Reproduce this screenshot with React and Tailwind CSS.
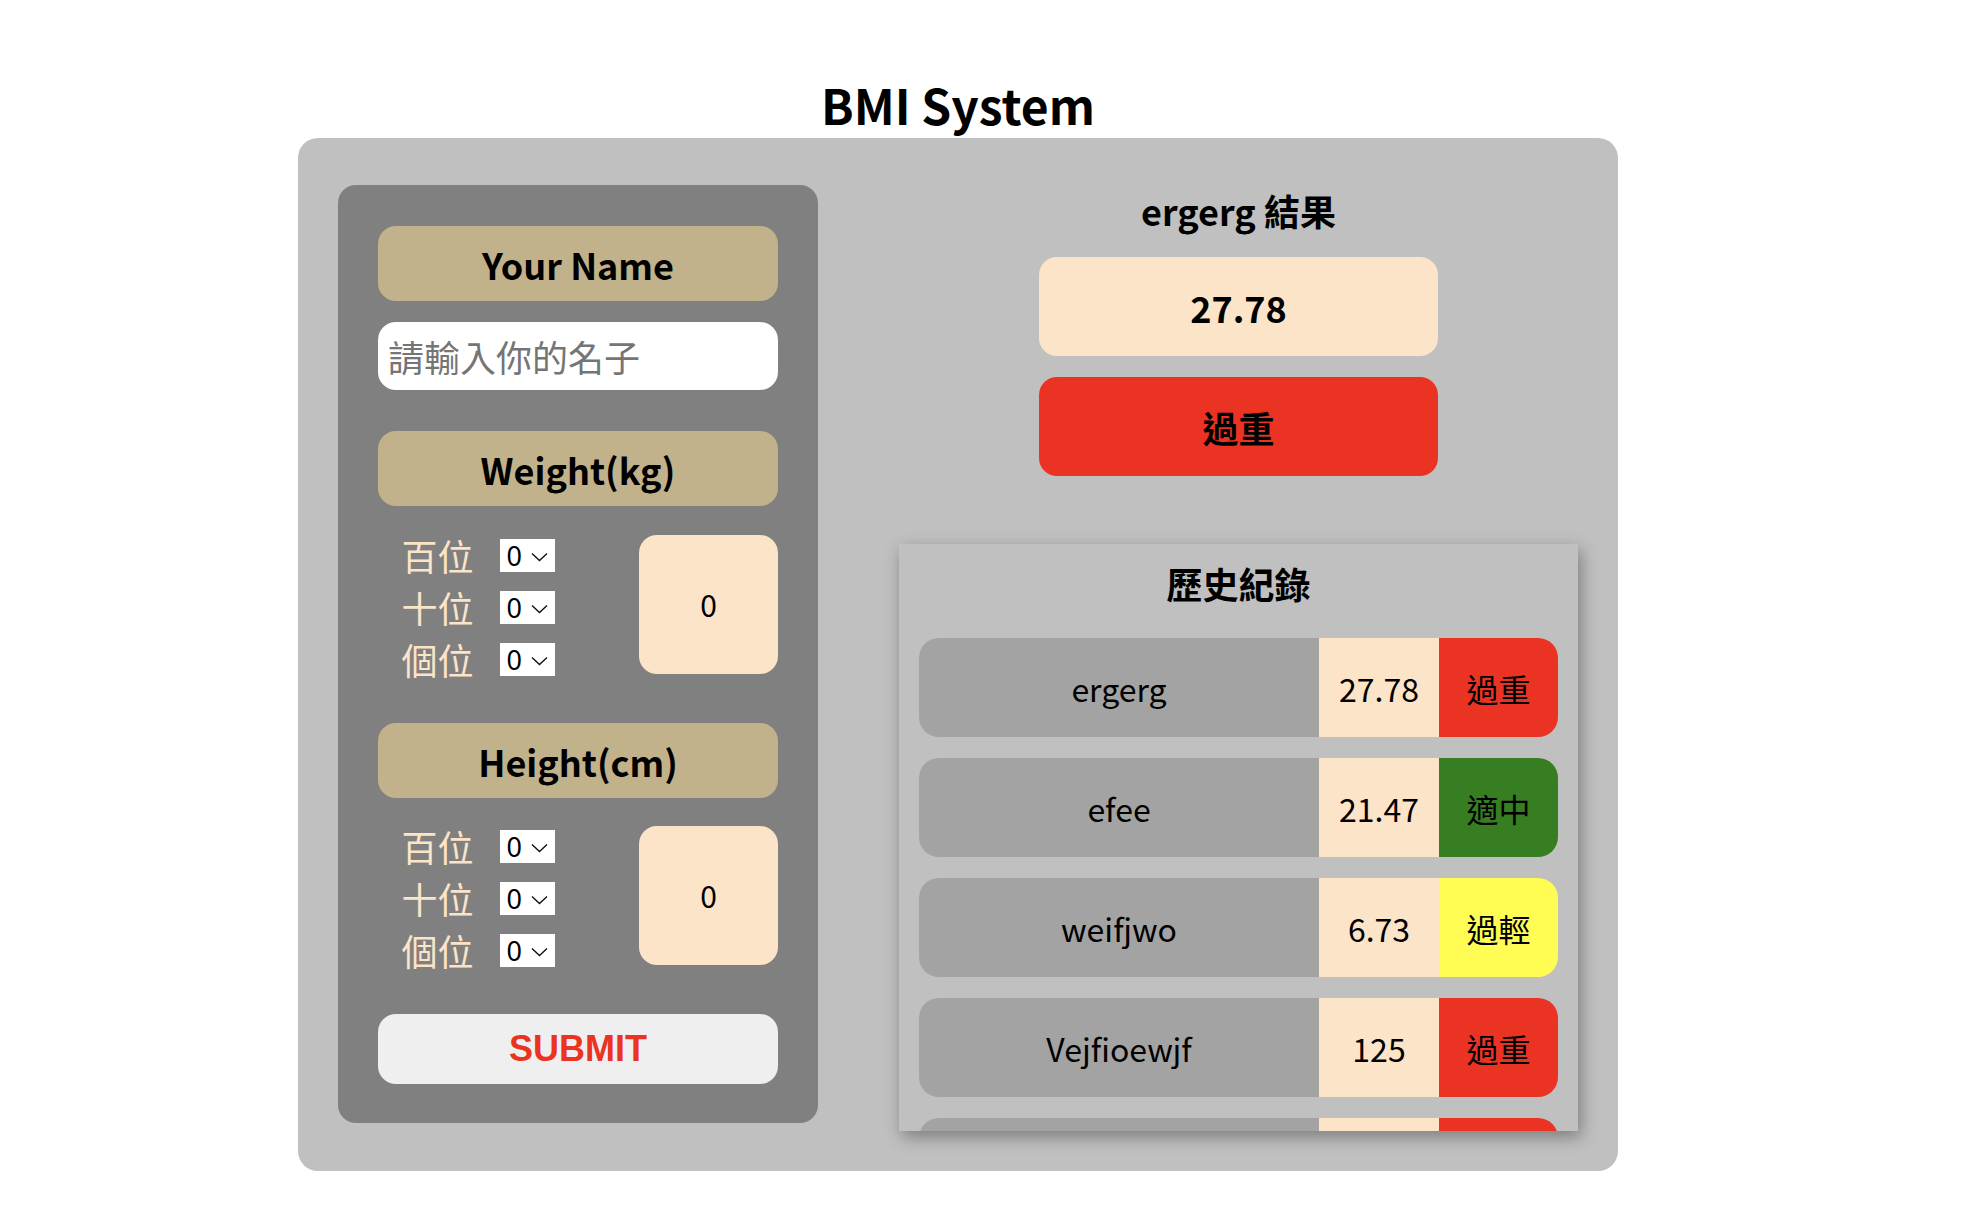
import React, { useState } from 'react';

const history = [
  { name: 'ergerg', bmi: '27.78', label: '過重', color: 'bg-[#ea3323]' },
  { name: 'efee', bmi: '21.47', label: '適中', color: 'bg-[#377d22]' },
  { name: 'weifjwo', bmi: '6.73', label: '過輕', color: 'bg-[#fffd54]' },
  { name: 'Vejfioewjf', bmi: '125', label: '過重', color: 'bg-[#ea3323]' },
  // last row is cut off by the scroll box, nothing readable
  { name: '', bmi: '', label: '', color: 'bg-[#ea3323]' },
];

const digits = ['0', '1', '2', '3', '4', '5', '6', '7', '8', '9'];

const DigitSelect = () => (
  <div className="relative w-[55px] h-[33px] bg-white">
    <select
      defaultValue="0"
      className="appearance-none bg-transparent text-black text-[27px] leading-[33px] w-full h-full pl-[7px] outline-none font-['Noto_Sans',sans-serif]"
    >
      {digits.map((d) => (
        <option key={d} value={d}>{d}</option>
      ))}
    </select>
    <svg
      className="pointer-events-none absolute left-[31px] top-[13px]"
      width="17"
      height="10"
      viewBox="0 0 17 10"
      fill="none"
    >
      <path d="M1 1.5 L8.5 8.5 L16 1.5" stroke="#111" strokeWidth="1.4" />
    </svg>
  </div>
);

const DigitPicker = ({ value }) => {
  const places = ['百位', '十位', '個位'];
  return (
    <div className="flex items-center justify-between h-[139px]">
      <div className="w-[200px] flex justify-center">
        <div className="flex flex-col mt-[5px]">
          {places.map((p) => (
            <div key={p} className="flex items-center gap-[26px] h-[52px]">
              <span className="text-[36px] leading-[52px] text-[#fbe4c8]">{p}</span>
              <DigitSelect />
            </div>
          ))}
        </div>
      </div>
      <div className="w-[139px] h-[139px] rounded-[18px] bg-[#fbe4c8] flex justify-center items-center text-[30px]">
        {value}
      </div>
    </div>
  );
};

const Label = ({ children }) => (
  <div className="h-[75px] rounded-[18px] bg-[#c2b28b] flex justify-center items-center text-[36px] font-bold">
    {children}
  </div>
);

const App = () => {
  const [name, setName] = useState('');

  return (
    <div className="min-h-screen bg-white text-black font-['Noto_Sans_CJK_TC','Noto_Sans',sans-serif]">
      <div className="ml-[298px] w-[1320px] pt-[70px]">
        <h1 className="text-center text-[48px] font-bold leading-[68px]">BMI System</h1>

        <div className="flex justify-between rounded-[20px] bg-[#c0c0c0] px-[40px] pt-[47px] pb-[40px]">
          {/* left form panel */}
          <div className="w-[480px] h-[938px] rounded-[18px] bg-[#808080] px-[40px] pt-[41px] flex flex-col">
            <Label>Your Name</Label>
            <input
              value={name}
              onChange={(e) => setName(e.target.value)}
              placeholder="請輸入你的名子"
              className="mt-[21px] h-[68px] rounded-[18px] bg-white pl-[10px] text-[36px] placeholder:text-[#757575] outline-none"
            />
            <div className="mt-[41px]">
              <Label>Weight(kg)</Label>
            </div>
            <div className="mt-[29px]">
              <DigitPicker value="0" />
            </div>
            <div className="mt-[49px]">
              <Label>Height(cm)</Label>
            </div>
            <div className="mt-[28px]">
              <DigitPicker value="0" />
            </div>
            <button className="mt-[49px] h-[70px] rounded-[18px] bg-[#efefef] text-[#ea3323] text-[36px] font-bold font-['Liberation_Sans',Arial,sans-serif]">
              SUBMIT
            </button>
          </div>

          {/* right result column */}
          <div className="w-[679px] flex flex-col items-center">
            <div className="-mt-[1px] text-[36px] leading-[52px] font-bold">ergerg 結果</div>
            <div className="mt-[21px] w-[399px] h-[99px] rounded-[18px] bg-[#fbe4c8] flex justify-center items-center text-[36px] font-bold">
              27.78
            </div>
            <div className="mt-[21px] w-[399px] h-[99px] rounded-[18px] bg-[#ea3323] flex justify-center items-center text-[36px] font-bold">
              過重
            </div>

            <div className="mt-[68px] w-[679px] h-[587px] overflow-hidden bg-[#c0c0c0] shadow-[3px_6px_16px_rgba(0,0,0,0.35)] px-[20px] pt-[13px]">
              <div className="text-center text-[36px] leading-[52px] font-bold">歷史紀錄</div>
              <div className="mt-[29px] flex flex-col gap-[21px]">
                {history.map((h, i) => (
                  <div key={i} className="flex h-[99px] shrink-0 text-[32px]">
                    <div className="w-[400px] rounded-l-[20px] bg-[#a3a3a3] flex justify-center items-center">
                      {h.name}
                    </div>
                    <div className="w-[120px] bg-[#fbe4c8] flex justify-center items-center">{h.bmi}</div>
                    <div className={`flex-1 rounded-r-[20px] ${h.color} flex justify-center items-center`}>
                      {h.label}
                    </div>
                  </div>
                ))}
              </div>
            </div>
          </div>
        </div>
      </div>
    </div>
  );
};

export default App;
